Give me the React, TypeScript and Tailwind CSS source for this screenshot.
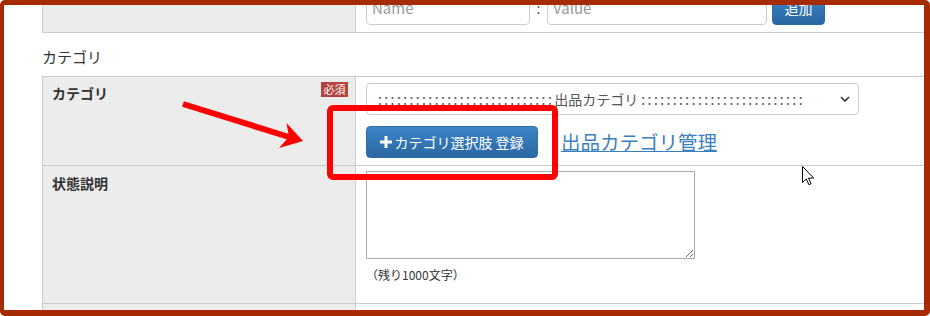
import React from 'react';

const FONT = '"Noto Sans CJK JP", "Noto Sans", sans-serif';

function Colons({ n }: { n: number }) {
  return <span className="tracking-[2.4px]">{':'.repeat(n)}</span>;
}

function PlusIcon() {
  return (
    <svg width="12" height="12" viewBox="0 0 12 12" className="shrink-0">
      <path d="M4.5 0h3v4.5H12v3H7.5V12h-3V7.5H0v-3h4.5z" fill="#fff" />
    </svg>
  );
}

function Overlay() {
  // annotation drawn on top of the screenshot: arrow, box, mouse pointer
  return (
    <svg
      className="pointer-events-none absolute left-[-4px] top-[-5px]"
      width="930"
      height="316"
      viewBox="0 0 930 316"
    >
      <line x1="183" y1="104" x2="289" y2="137" stroke="#ff0000" strokeWidth="6" />
      <polygon points="303,141 286.5,123 289,137 279,148" fill="#ff0000" />
      <rect x="330" y="108" width="225" height="69" rx="3" fill="none" stroke="#ff0000" strokeWidth="6" />
      <path
        d="M802.5 166.5v16l3.8-3.6 2.6 5.8 2.2-1-2.6-5.6h5.2z"
        fill="#fff"
        stroke="#000"
        strokeWidth="1"
        strokeLinejoin="round"
      />
    </svg>
  );
}

export default function App() {
  return (
    <div
      className="relative w-[930px] h-[316px] overflow-hidden bg-white border-t-[5px] border-l-4 border-r-[6px] border-b-[6px] border-[#a62b03] rounded-[5px] text-[#333]"
      style={{ fontFamily: FONT }}
    >
      <div className="pl-[38px] -mt-[20px]">
        {/* previous table, only its last row is visible */}
        <div className="grid grid-cols-[314px_1fr]">
          <div className="bg-[#ececec] border-l border-r border-b border-[#ccc]" />
          <div className="flex items-center pl-[10px] pt-[6px] pb-[7px] border-b border-[#ccc]">
            <div className="w-[164px] h-[34px] border border-[#ccc] rounded-[4px] pl-[5px] flex items-center text-[15px] text-[#999]">
              Name
            </div>
            <div className="w-[17px] text-center text-[14px] text-[#555]">:</div>
            <div className="w-[220px] h-[34px] border border-[#ccc] rounded-[4px] pl-[5px] flex items-center text-[15px] text-[#999]">
              Value
            </div>
            <button
              type="button"
              className="ml-[5px] w-[53px] h-[34px] rounded-[4px] border border-[#2e6da4] bg-gradient-to-b from-[#3d86c6] to-[#2a67a3] text-white text-[14px]"
            >
              追加
            </button>
          </div>
        </div>

        <h3 className="pt-[14px] mb-[9px] text-[15px] leading-[20px] font-normal">カテゴリ</h3>

        <div className="grid grid-cols-[314px_1fr] border-t border-[#ccc]">
          <div className="relative bg-[#ececec] border-l border-r border-b border-[#ccc] pl-[9px] pt-[6px] text-[14px] leading-[20px] font-bold">
            カテゴリ
            <span className="absolute right-[7px] top-[5px] w-[27px] h-[15px] bg-[#b5443f] text-white text-[11px] leading-[15px] font-normal text-center">
              必須
            </span>
          </div>
          <div className="pl-[10px] pt-[6px] pb-[7px] border-b border-[#ccc]">
            <div className="w-[493px] h-[32px] border border-[#ccc] rounded-[4px] pl-[11px] pr-[8px] flex items-center justify-between text-[14px] text-[#555]">
              <span className="whitespace-nowrap">
                <Colons n={28} />出品カテゴリ <Colons n={26} />
              </span>
              <svg width="10" height="6" viewBox="0 0 10 6">
                <path d="M1 1l4 4 4-4" fill="none" stroke="#333" strokeWidth="1.6" />
              </svg>
            </div>
            <div className="mt-[11px] flex items-center gap-[23px]">
              <button
                type="button"
                className="w-[172px] h-[32px] rounded-[4px] border border-[#2e6da4] bg-gradient-to-b from-[#3d86c6] to-[#2a67a3] text-white text-[14px] flex items-center justify-center gap-[2px]"
              >
                <PlusIcon />
                カテゴリ選択肢 登録
              </button>
              <a href="#" className="text-[19.5px] leading-[26px] text-[#3a80c0] underline">
                出品カテゴリ管理
              </a>
            </div>
          </div>

          <div className="bg-[#ececec] border-l border-r border-b border-[#ccc] pl-[9px] pt-[7px] text-[14px] leading-[20px] font-bold">
            状態説明
          </div>
          <div className="pl-[10px] pt-[5px] pb-[20px] border-b border-[#ccc]">
            <textarea
              readOnly
              className="block w-[329px] h-[88px] border border-[#aaa] bg-white outline-none"
            />
            <p className="mt-[7px] text-[12px] leading-[17px]">（残り1000文字）</p>
          </div>

          <div className="h-[20px] bg-[#ececec] border-l border-r border-[#ccc]" />
          <div />
        </div>
      </div>
      <Overlay />
    </div>
  );
}
